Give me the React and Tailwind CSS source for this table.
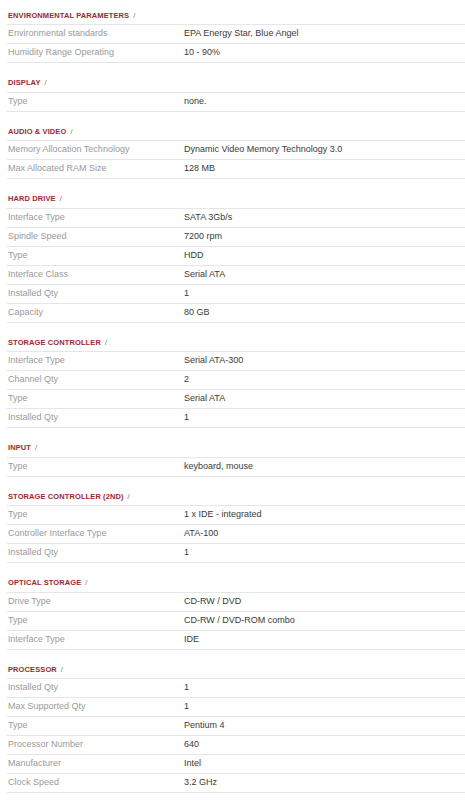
import React from "react";

const sections = [
  { title: "ENVIRONMENTAL PARAMETERS", rows: [["Environmental standards", "EPA Energy Star, Blue Angel"], ["Humidity Range Operating", "10 - 90%"]] },
  { title: "DISPLAY", rows: [["Type", "none."]] },
  { title: "AUDIO & VIDEO", rows: [["Memory Allocation Technology", "Dynamic Video Memory Technology 3.0"], ["Max Allocated RAM Size", "128 MB"]] },
  { title: "HARD DRIVE", rows: [["Interface Type", "SATA 3Gb/s"], ["Spindle Speed", "7200 rpm"], ["Type", "HDD"], ["Interface Class", "Serial ATA"], ["Installed Qty", "1"], ["Capacity", "80 GB"]] },
  { title: "STORAGE CONTROLLER", rows: [["Interface Type", "Serial ATA-300"], ["Channel Qty", "2"], ["Type", "Serial ATA"], ["Installed Qty", "1"]] },
  { title: "INPUT", rows: [["Type", "keyboard, mouse"]] },
  { title: "STORAGE CONTROLLER (2ND)", rows: [["Type", "1 x IDE - integrated"], ["Controller Interface Type", "ATA-100"], ["Installed Qty", "1"]] },
  { title: "OPTICAL STORAGE", rows: [["Drive Type", "CD-RW / DVD"], ["Type", "CD-RW / DVD-ROM combo"], ["Interface Type", "IDE"]] },
  { title: "PROCESSOR", rows: [["Installed Qty", "1"], ["Max Supported Qty", "1"], ["Type", "Pentium 4"], ["Processor Number", "640"], ["Manufacturer", "Intel"], ["Clock Speed", "3.2 GHz"]] },
];

export default function App() {
  return (
    <div className="w-[465px] h-[800px] overflow-hidden bg-white pt-[7px] pl-[7px]" style={{ fontFamily: '"Liberation Sans", Arial, sans-serif' }}>
      <div className="flex flex-col gap-[11.5px]">
        {sections.map((s) => (
          <div key={s.title} className="flex flex-col">
            <div className="h-[18px] flex items-center border-b border-[#e6e6e6] pl-[1px] text-[7.5px] font-bold text-[#a3262d] tracking-[0.1px]">
              {s.title} <span className="ml-[4px] font-normal text-[#b06068]">/</span>
            </div>
            {s.rows.map((r, i) => (
              <div key={i} className="h-[19px] flex items-center border-b border-[#e6e6e6] text-[9px]">
                <div className="w-[177px] pl-[1px] text-[#9a9a9a]">{r[0]}</div>
                <div className="text-[#3a3a3a]">{r[1]}</div>
              </div>
            ))}
          </div>
        ))}
      </div>
    </div>
  );
}
